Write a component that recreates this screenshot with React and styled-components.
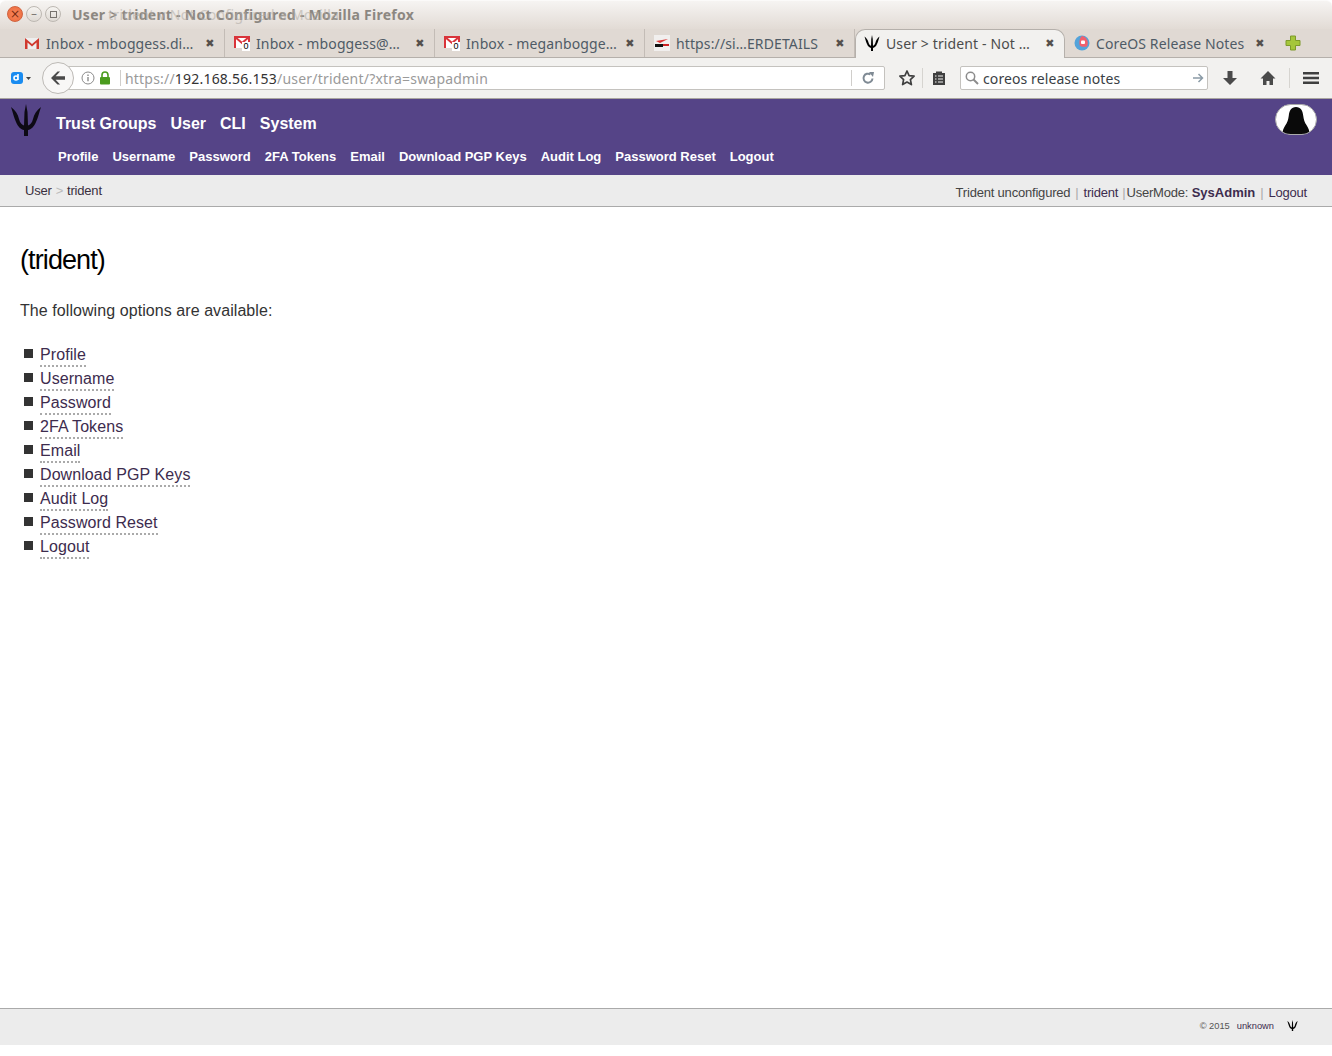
import styled, { createGlobalStyle } from "styled-components";

const Global = createGlobalStyle`
  html, body { margin: 0; padding: 0; background: #fff; }
  * { box-sizing: border-box; }
`;

const Page = styled.div`
  display: flex;
  flex-direction: column;
  height: 1056px;
  overflow: hidden;
  font-family: "Liberation Sans", Arial, sans-serif;
  color: #333;
`;

const TitleBar = styled.div`
  height: 29px;
  display: flex;
  align-items: center;
  gap: 3px;
  padding: 0 0 2px 7px;
  background: linear-gradient(#f6f4f2, #e2dbd5);
  border-top: 1px solid #fbfaf9;
  border-radius: 6px 6px 0 0;
`;
const WinButton = styled.span`
  width: 16px;
  height: 16px;
  border-radius: 50%;
  border: 1px solid ${(p) => (p.$close ? "#d0633f" : "#bdb8b2")};
  background: ${(p) => (p.$close ? "radial-gradient(#f8865b, #ec6a3c)" : "linear-gradient(#f6f4f1, #dfdad4)")};
  display: flex;
  align-items: center;
  justify-content: center;
  font: 12px/1 "DejaVu Sans", sans-serif;
  color: ${(p) => (p.$close ? "#7a2a10" : "#77736e")};
`;
const WinSquare = styled.span`
  width: 7px;
  height: 7px;
  border: 1px solid #77736e;
`;
const WindowTitle = styled.div`
  position: relative;
  margin-left: 8px;
  font: 700 14px "Noto Sans", sans-serif;
  letter-spacing: 0.27px;
  color: #8c8781;
`;
const GhostTitle = styled.span`
  position: absolute;
  left: 36px;
  top: 0;
  white-space: nowrap;
  font-weight: 400;
  color: #b3aea8;
  opacity: 0.6;
`;

const TabStrip = styled.div`
  height: 29px;
  display: flex;
  padding-left: 15px;
  background: #e0d9d3;
  border-bottom: 1px solid #b5b0ab;
`;
const Tab = styled.div`
  width: 210px;
  display: flex;
  align-items: center;
  gap: 6px;
  padding: 0 8px 0 9px;
  height: 28px;
  font: 14px "Noto Sans", sans-serif;
  letter-spacing: 0.12px;
  color: ${(p) => (p.$active ? "#4c4c4c" : "#4f5b66")};
  background: ${(p) => (p.$active ? "#f2f1ef" : "transparent")};
  border-right: 1px solid ${(p) => (p.$active || p.$plain ? "transparent" : "#c3bcb6")};
  ${(p) =>
    p.$active &&
    `
    height: 29px;
    border: 1px solid #b5b0ab;
    border-bottom: none;
    border-radius: 10px 10px 0 0;
    padding-left: 8px;
    padding-bottom: 2px;
  `}
`;
const TabLabel = styled.span`
  flex: 1;
  white-space: nowrap;
  overflow: hidden;
`;
const TabClose = styled.span`
  font: 700 11px "DejaVu Sans", sans-serif;
  color: #55504c;
  width: 12px;
  text-align: center;
`;
const NewTab = styled.div`
  margin-left: 10px;
  display: flex;
  align-items: center;
  height: 28px;
`;
const FaviconWrap = styled.span`
  position: relative;
  display: flex;
  flex: none;
  align-items: ${(p) => (p.$top ? "flex-start" : "center")};
  width: 16px;
  height: 16px;
`;
const UnreadBadge = styled.span`
  position: absolute;
  right: 0;
  bottom: 0;
  width: 8px;
  height: 9px;
  background: #fff;
  color: #000;
  font: 9px/9px "Liberation Sans", sans-serif;
  text-align: center;
`;

const NavBar = styled.div`
  height: 41px;
  display: flex;
  align-items: center;
  padding-left: 10px;
  background: #f2f1ef;
  border-bottom: 1px solid #a9a5a0;
`;
const ExtButton = styled.div`
  width: 32px;
  display: flex;
  align-items: center;
  gap: 2px;
`;
const BackButton = styled.div`
  width: 32px;
  height: 32px;
  flex: none;
  border-radius: 50%;
  border: 1px solid #bdbab6;
  background: #f8f7f6;
  display: flex;
  align-items: center;
  justify-content: center;
  position: relative;
  z-index: 1;
`;
const UrlBar = styled.div`
  width: 817px;
  height: 24px;
  margin-left: -6px;
  padding-left: 12px;
  display: flex;
  align-items: center;
  background: #fff;
  border: 1px solid #c4c2be;
  border-radius: 0 2px 2px 0;
  font: 14px "Noto Sans", sans-serif;
  color: #9a9a9a;
`;
const UrlIcons = styled.div`
  display: flex;
  align-items: center;
  gap: 4px;
  padding-right: 9px;
  margin-right: 4px;
  height: 16px;
  border-right: 1px solid #d0cecb;
`;
const UrlText = styled.div`
  flex: 1;
  white-space: nowrap;
  letter-spacing: 0.2px;
`;
const Host = styled.span`
  color: #333;
`;
const Reload = styled.div`
  width: 33px;
  height: 16px;
  display: flex;
  align-items: center;
  justify-content: center;
  border-left: 1px solid #d0cecb;
`;
const ToolButton = styled.div`
  display: flex;
  align-items: center;
  justify-content: center;
  width: ${(p) => p.$w}px;
  height: 20px;
  padding: 0 ${(p) => p.$pr || 0}px 0 ${(p) => p.$pl || 0}px;
  border-left: ${(p) => (p.$line ? "1px solid #d6d4d0" : "none")};
`;
const SearchBar = styled.div`
  width: 248px;
  height: 24px;
  margin-left: 6px;
  padding: 0 3px 0 3px;
  display: flex;
  align-items: center;
  gap: 3px;
  background: #fff;
  border: 1px solid #c4c2be;
  border-radius: 2px;
  font: 14px "Noto Sans", sans-serif;
  letter-spacing: 0.1px;
  color: #3a3f45;
`;
const SearchText = styled.span`
  flex: 1;
`;

const Header = styled.header`
  height: 76px;
  background: #554487;
  display: flex;
  justify-content: space-between;
`;
const Logo = styled.div`
  width: 56px;
  padding: 5px 0 0 10px;
`;
const Menus = styled.div`
  flex: 1;
`;
const MainNav = styled.nav`
  display: flex;
  gap: 14px;
  height: 49px;
  align-items: center;
  font-size: 16px;
  font-weight: 700;
  color: #fff;
`;
const SubNav = styled.nav`
  display: flex;
  gap: 14px;
  padding-left: 2px;
  font-size: 13px;
  font-weight: 700;
  line-height: 18px;
  color: #fff;
`;
const Avatar = styled.div`
  width: 42px;
  height: 31px;
  margin: 5px 15px 0 0;
  border-radius: 16px;
  background: #fff;
  border: 1px solid #aaa;
  overflow: hidden;
  display: flex;
  justify-content: center;
  align-items: flex-end;
`;

const Crumbs = styled.div`
  height: 32px;
  display: flex;
  justify-content: space-between;
  align-items: center;
  padding: 0 25px;
  background: #ececec;
  border-bottom: 1px solid #aaa;
  font-size: 13px;
  letter-spacing: -0.2px;
  color: #3a3040;
`;
const CrumbPath = styled.div`
  display: flex;
  gap: 4px;
`;
const CrumbSep = styled.span`
  color: #bbb;
`;
const Status = styled.div`
  display: flex;
  margin-top: 3px;
  color: #444;
`;
const StatusLink = styled.span`
  color: #3d2c4e;
  font-weight: ${(p) => (p.$bold ? 700 : 400)};
  letter-spacing: ${(p) => (p.$bold ? "0" : "inherit")};
`;
const Pipe = styled.span`
  color: #aaa;
  margin: ${(p) => (p.$tight ? "0 1px 0 4px" : "0 5px")};
`;

const Main = styled.main`
  flex: 1;
  padding: 35px 20px 0;
`;
const Heading = styled.h1`
  margin: 0;
  font-size: 27px;
  font-weight: 400;
  line-height: 36px;
  letter-spacing: -0.9px;
  color: #000;
`;
const Lead = styled.p`
  margin: 21px 0 0;
  font-size: 16px;
  line-height: 24px;
  letter-spacing: 0.07px;
`;
const Options = styled.ul`
  list-style: none;
  margin: 21px 0 0;
  padding: 0;
`;
const Option = styled.li`
  display: flex;
  align-items: flex-start;
  gap: 7px;
  height: 24px;
  padding-left: 4px;
  &::before {
    content: "";
    width: 9px;
    height: 9px;
    margin-top: 5px;
    background: #333;
  }
`;
const OptionLink = styled.a`
  font-size: 16px;
  line-height: 21px;
  letter-spacing: 0.08px;
  color: #3d2c4e;
  border-bottom: 2px dotted #aaa;
`;

const Footer = styled.footer`
  height: 37px;
  margin-bottom: 11px;
  display: flex;
  justify-content: flex-end;
  align-items: center;
  gap: 7px;
  padding: 0 34px 2px 0;
  background: #ececec;
  border-top: 1px solid #aaa;
  font-size: 9.3px;
  color: #555;
`;
const FooterLink = styled.span`
  color: #3d2c4e;
  margin-right: 6px;
`;
const FooterMark = styled.span`
  display: flex;
  margin-bottom: 2px;
`;

function Trident({ size = 32, color = "#000" }) {
  return (
    <svg width={size} height={size} viewBox="0 0 32 32" fill={color}>
      <path d="M1 3C5 6 8 10 9 15C10 19 12 21 14 21.500L14.500 8L16 0L17.500 8L18 21.500C20 21 22 19 23 15C24 10 27 6 31 3C29 9 28 14 26 18C24 23 21 25.500 18 26L18 32L14 32L14 26C11 25.500 8 23 6 18C4 14 3 9 1 3Z" />
    </svg>
  );
}

function Gmail({ badge }) {
  if (badge) {
    return (
      <FaviconWrap $top>
        <svg width="16" height="13" viewBox="0 0 16 13">
          <rect x="1" y="2" width="14" height="11" fill="#fff" />
          <path d="M1 13V2h14v11M1 2l7 6 7-6" fill="none" stroke="#d9343a" strokeWidth="2" />
        </svg>
        <UnreadBadge>0</UnreadBadge>
      </FaviconWrap>
    );
  }
  return (
    <FaviconWrap>
      <svg width="16" height="16" viewBox="0 0 16 16">
        <rect x="1" y="3" width="14" height="11" fill="#eee" />
        <path d="M1 14V3l7 6 7-6v11h-2.500V7.500L8 11.500 3.500 7.500V14Z" fill="#d0392e" />
      </svg>
    </FaviconWrap>
  );
}

function SiteIcon() {
  return (
    <FaviconWrap>
      <svg width="16" height="16" viewBox="0 0 16 16">
        <rect width="16" height="16" fill="#f1efee" />
        <path d="M2 6l12-2-8 4z" fill="#d33" />
        <rect x="1" y="9" width="8" height="3" fill="#111" />
        <rect x="9" y="9" width="6" height="2" fill="#c22" />
      </svg>
    </FaviconWrap>
  );
}

function CoreosIcon() {
  return (
    <FaviconWrap>
      <svg width="16" height="16" viewBox="0 0 16 16">
        <circle cx="8" cy="8" r="7.500" fill="#53a3da" />
        <path d="M8 1a7 7 0 0 1 4.800 10.500C11 12 8 12 6 11 5 9 5 3 8 1Z" fill="#f1606d" />
        <rect x="7" y="5.500" width="4" height="3.500" rx="1" fill="#fff" />
      </svg>
    </FaviconWrap>
  );
}

const tabs = [
  { label: "Inbox - mboggess.di…", icon: <Gmail /> },
  { label: "Inbox - mboggess@…", icon: <Gmail badge /> },
  { label: "Inbox - meganbogge…", icon: <Gmail badge /> },
  { label: "https://si…ERDETAILS", icon: <SiteIcon /> },
  { label: "User > trident - Not …", icon: <FaviconWrap><Trident size={16} /></FaviconWrap>, active: true },
  { label: "CoreOS Release Notes", icon: <CoreosIcon />, plain: true },
];

const mainNav = ["Trust Groups", "User", "CLI", "System"];
const subNav = ["Profile", "Username", "Password", "2FA Tokens", "Email", "Download PGP Keys", "Audit Log", "Password Reset", "Logout"];

export default function App() {
  return (
    <Page>
      <Global />
      <TitleBar>
        <WinButton $close>×</WinButton>
        <WinButton>–</WinButton>
        <WinButton><WinSquare /></WinButton>
        <WindowTitle>
          User &gt; trident - Not Configured - Mozilla Firefox
          <GhostTitle>trident v Not Configured a Mozilla</GhostTitle>
        </WindowTitle>
      </TitleBar>

      <TabStrip>
        {tabs.map((t) => (
          <Tab key={t.label} $active={t.active} $plain={t.plain}>
            {t.icon}
            <TabLabel>{t.label}</TabLabel>
            <TabClose>✖</TabClose>
          </Tab>
        ))}
        <NewTab>
          <svg width="16" height="16" viewBox="0 0 16 16">
            <path d="M5.500 1h5v4.500H15v5h-4.500V15h-5v-4.500H1v-5h4.500Z" fill="#a5c63b" stroke="#7d9a2a" />
          </svg>
        </NewTab>
      </TabStrip>

      <NavBar>
        <ExtButton>
          <svg width="14" height="14" viewBox="0 0 14 14">
            <rect x="1" y="1" width="12" height="12" rx="3" fill="#1a8cf0" />
            <path d="M4 7a2 2 0 1 0 4 0a2 2 0 1 0-4 0M8 3v6" fill="none" stroke="#fff" strokeWidth="1.600" />
          </svg>
          <svg width="5" height="3" viewBox="0 0 5 3"><path d="M0 0h5L2.500 3Z" fill="#444" /></svg>
        </ExtButton>
        <BackButton>
          <svg width="16" height="14" viewBox="0 0 16 14">
            <path d="M7.500 0.500L1 7l6.500 6.500h2.600L5.600 8.800H15V5.200H5.600l4.500-4.700Z" fill="#4a4a4a" />
          </svg>
        </BackButton>
        <UrlBar>
          <UrlIcons>
            <svg width="14" height="14" viewBox="0 0 14 14">
              <circle cx="7" cy="7" r="6" fill="none" stroke="#8a8a8a" />
              <path d="M7 6v4.200M7 3.500v1.400" stroke="#8a8a8a" strokeWidth="1.400" />
            </svg>
            <svg width="12" height="14" viewBox="0 0 12 14">
              <path d="M3 6V4a3 3 0 0 1 6 0v2" fill="none" stroke="#4b9c1e" strokeWidth="1.600" />
              <rect x="1" y="6" width="10" height="7.500" rx="1" fill="#4b9c1e" />
            </svg>
          </UrlIcons>
          <UrlText>
            https://<Host>192.168.56.153</Host>/user/trident/?xtra=swapadmin
          </UrlText>
          <Reload>
            <svg width="14" height="14" viewBox="0 0 14 14">
              <path d="M11.500 7.500A4.500 4.500 0 1 1 9.500 3.400" fill="none" stroke="#7f8a94" strokeWidth="2" />
              <path d="M8 1l5 0-1 5Z" fill="#7f8a94" />
            </svg>
          </Reload>
        </UrlBar>
        <ToolButton $w={37} $pl={7}>
          <svg width="18" height="18" viewBox="0 0 18 18">
            <path d="M9 2l2.100 4.600 5 .6-3.700 3.400 1 5L9 13.100l-4.400 2.500 1-5L1.900 7.200l5-.6Z" fill="none" stroke="#3f3f3f" strokeWidth="1.700" strokeLinejoin="round" />
          </svg>
        </ToolButton>
        <ToolButton $w={32} $line>
          <svg width="16" height="16" viewBox="0 0 16 16">
            <path d="M2 3h3V1.500h6V3h3v12H2Z" fill="#3f3f3f" />
            <path d="M4 6h1.500M7 6h5M4 9h1.500M7 9h5M4 12h1.500M7 12h5" stroke="#f2f1ef" strokeWidth="1.200" />
          </svg>
        </ToolButton>
        <SearchBar>
          <svg width="16" height="16" viewBox="0 0 16 16">
            <circle cx="6.500" cy="6.500" r="4.200" fill="none" stroke="#8c8c8c" strokeWidth="1.500" />
            <path d="M9.500 9.500L14 14" stroke="#8c8c8c" strokeWidth="2" />
          </svg>
          <SearchText>coreos release notes</SearchText>
          <svg width="12" height="12" viewBox="0 0 12 12">
            <path d="M1 6h9M6.500 2l4 4-4 4" fill="none" stroke="#8a9aa6" strokeWidth="1.500" />
          </svg>
        </SearchBar>
        <ToolButton $w={44}>
          <svg width="16" height="16" viewBox="0 0 16 16">
            <path d="M5.500 1h5v7H15l-7 7-7-7h4.500Z" fill="#4a4a4a" />
          </svg>
        </ToolButton>
        <ToolButton $w={37} $pr={5}>
          <svg width="16" height="16" viewBox="0 0 16 16">
            <path d="M8 1L0.500 8.500h2.500V15h3.500v-4h3v4H13V8.500h2.500Z" fill="#4a4a4a" />
          </svg>
        </ToolButton>
        <ToolButton $w={43} $line>
          <svg width="16" height="12" viewBox="0 0 16 12">
            <path d="M0 1.250h16M0 6h16M0 10.750h16" stroke="#3f3f3f" strokeWidth="2.400" />
          </svg>
        </ToolButton>
      </NavBar>

      <Header>
        <Logo>
          <Trident size={32} color="#0d0a14" />
        </Logo>
        <Menus>
          <MainNav>
            {mainNav.map((m) => (
              <span key={m}>{m}</span>
            ))}
          </MainNav>
          <SubNav>
            {subNav.map((s) => (
              <span key={s}>{s}</span>
            ))}
          </SubNav>
        </Menus>
        <Avatar>
          <svg width="28" height="27" viewBox="0 0 28 28">
            <path d="M14 0C19 0 21 4 21.500 9C22 13 23 16 25 19C27 22 28 25 28 28H0C0 25 1 22 3 19C5 16 6 13 6.500 9C7 4 9 0 14 0Z" fill="#0a0a0a" />
          </svg>
        </Avatar>
      </Header>

      <Crumbs>
        <CrumbPath>
          <span>User</span>
          <CrumbSep>&gt;</CrumbSep>
          <span>trident</span>
        </CrumbPath>
        <Status>
          Trident unconfigured
          <Pipe>|</Pipe>
          <StatusLink>trident</StatusLink>
          <Pipe $tight>|</Pipe>
          UserMode:&nbsp;
          <StatusLink $bold>SysAdmin</StatusLink>
          <Pipe>|</Pipe>
          <StatusLink>Logout</StatusLink>
        </Status>
      </Crumbs>

      <Main>
        <Heading>(trident)</Heading>
        <Lead>The following options are available:</Lead>
        <Options>
          {subNav.map((s) => (
            <Option key={s}>
              <OptionLink>{s}</OptionLink>
            </Option>
          ))}
        </Options>
      </Main>

      <Footer>
        <span>© 2015</span>
        <FooterLink>unknown</FooterLink>
        <FooterMark>
          <Trident size={11} />
        </FooterMark>
      </Footer>
    </Page>
  );
}
